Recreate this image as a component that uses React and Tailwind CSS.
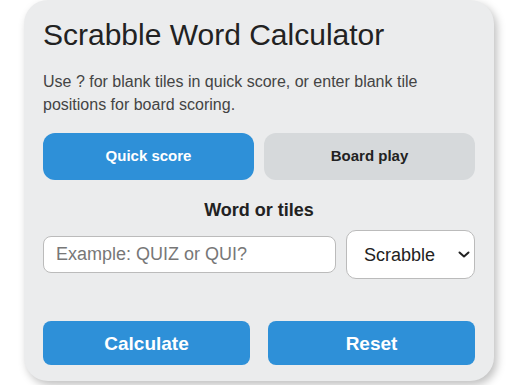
import { useState } from "react";

function App() {
  const [mode, setMode] = useState("quick");
  const [word, setWord] = useState("");
  const [game, setGame] = useState("scrabble");

  return (
    <div className="min-h-screen bg-white" style={{ fontFamily: '"Liberation Sans", Arial, sans-serif' }}>
      <div className="ml-[24px] w-[470px] rounded-[24px] bg-[#ebeced] px-[19px] pt-[17px] pb-[16px] shadow-[3px_4px_8px_rgba(0,0,0,0.25)]">
        <h1 className="text-[30px] leading-[36px] text-[#222]">Scrabble Word Calculator</h1>
        <p className="mt-[17px] text-[16px] leading-[23px] text-[#444]">
          Use ? for blank tiles in quick score, or enter blank tile positions for board scoring.
        </p>

        <div className="mt-[17px] grid grid-cols-2 gap-[10px]">
          <button
            onClick={() => setMode("quick")}
            className={`h-[47px] rounded-[12px] text-[15px] font-bold ${
              mode === "quick" ? "bg-[#2e90d8] text-white" : "bg-[#d6d9db] text-[#222]"
            }`}
          >
            Quick score
          </button>
          <button
            onClick={() => setMode("board")}
            className={`h-[47px] rounded-[12px] text-[15px] font-bold ${
              mode === "board" ? "bg-[#2e90d8] text-white" : "bg-[#d6d9db] text-[#222]"
            }`}
          >
            Board play
          </button>
        </div>

        <div className="mt-[19px] text-center text-[18px] leading-[23px] font-bold text-[#222]">Word or tiles</div>

        <div className="mt-[8px] flex items-center gap-[10px]">
          <input
            value={word}
            onChange={(e) => setWord(e.target.value)}
            placeholder="Example: QUIZ or QUI?"
            className="h-[37px] min-w-0 flex-1 rounded-[8px] border border-[#bbb] bg-white px-[12px] text-[18px] text-[#222] outline-none placeholder:text-[#777]"
          />
          <div className="relative w-[129px]">
            <select
              value={game}
              onChange={(e) => setGame(e.target.value)}
              className="h-[49px] w-full appearance-none rounded-[10px] border border-[#bbb] bg-white pl-[17px] pt-[1px] text-[18px] text-[#222] outline-none"
            >
              <option value="scrabble">Scrabble</option>
              <option value="wwf">Words With Friends</option>
            </select>
            <svg
              className="pointer-events-none absolute left-[112px] top-[21px]"
              width="12"
              height="8"
              viewBox="0 0 12 8"
              fill="none"
              stroke="#222"
              strokeWidth="2"
              strokeLinecap="round"
              strokeLinejoin="round"
            >
              <path d="M1.5 1.5L6 5.5L10.5 1.5" />
            </svg>
          </div>
        </div>

        <div className="mt-[42px] flex gap-[18px]">
          <button className="h-[44px] flex-1 rounded-[8px] bg-[#2e90d8] pt-[2px] text-[19px] font-bold text-white">
            Calculate
          </button>
          <button className="h-[44px] flex-1 rounded-[8px] bg-[#2e90d8] pt-[2px] text-[19px] font-bold text-white">
            Reset
          </button>
        </div>
      </div>
    </div>
  );
}

export default App;
